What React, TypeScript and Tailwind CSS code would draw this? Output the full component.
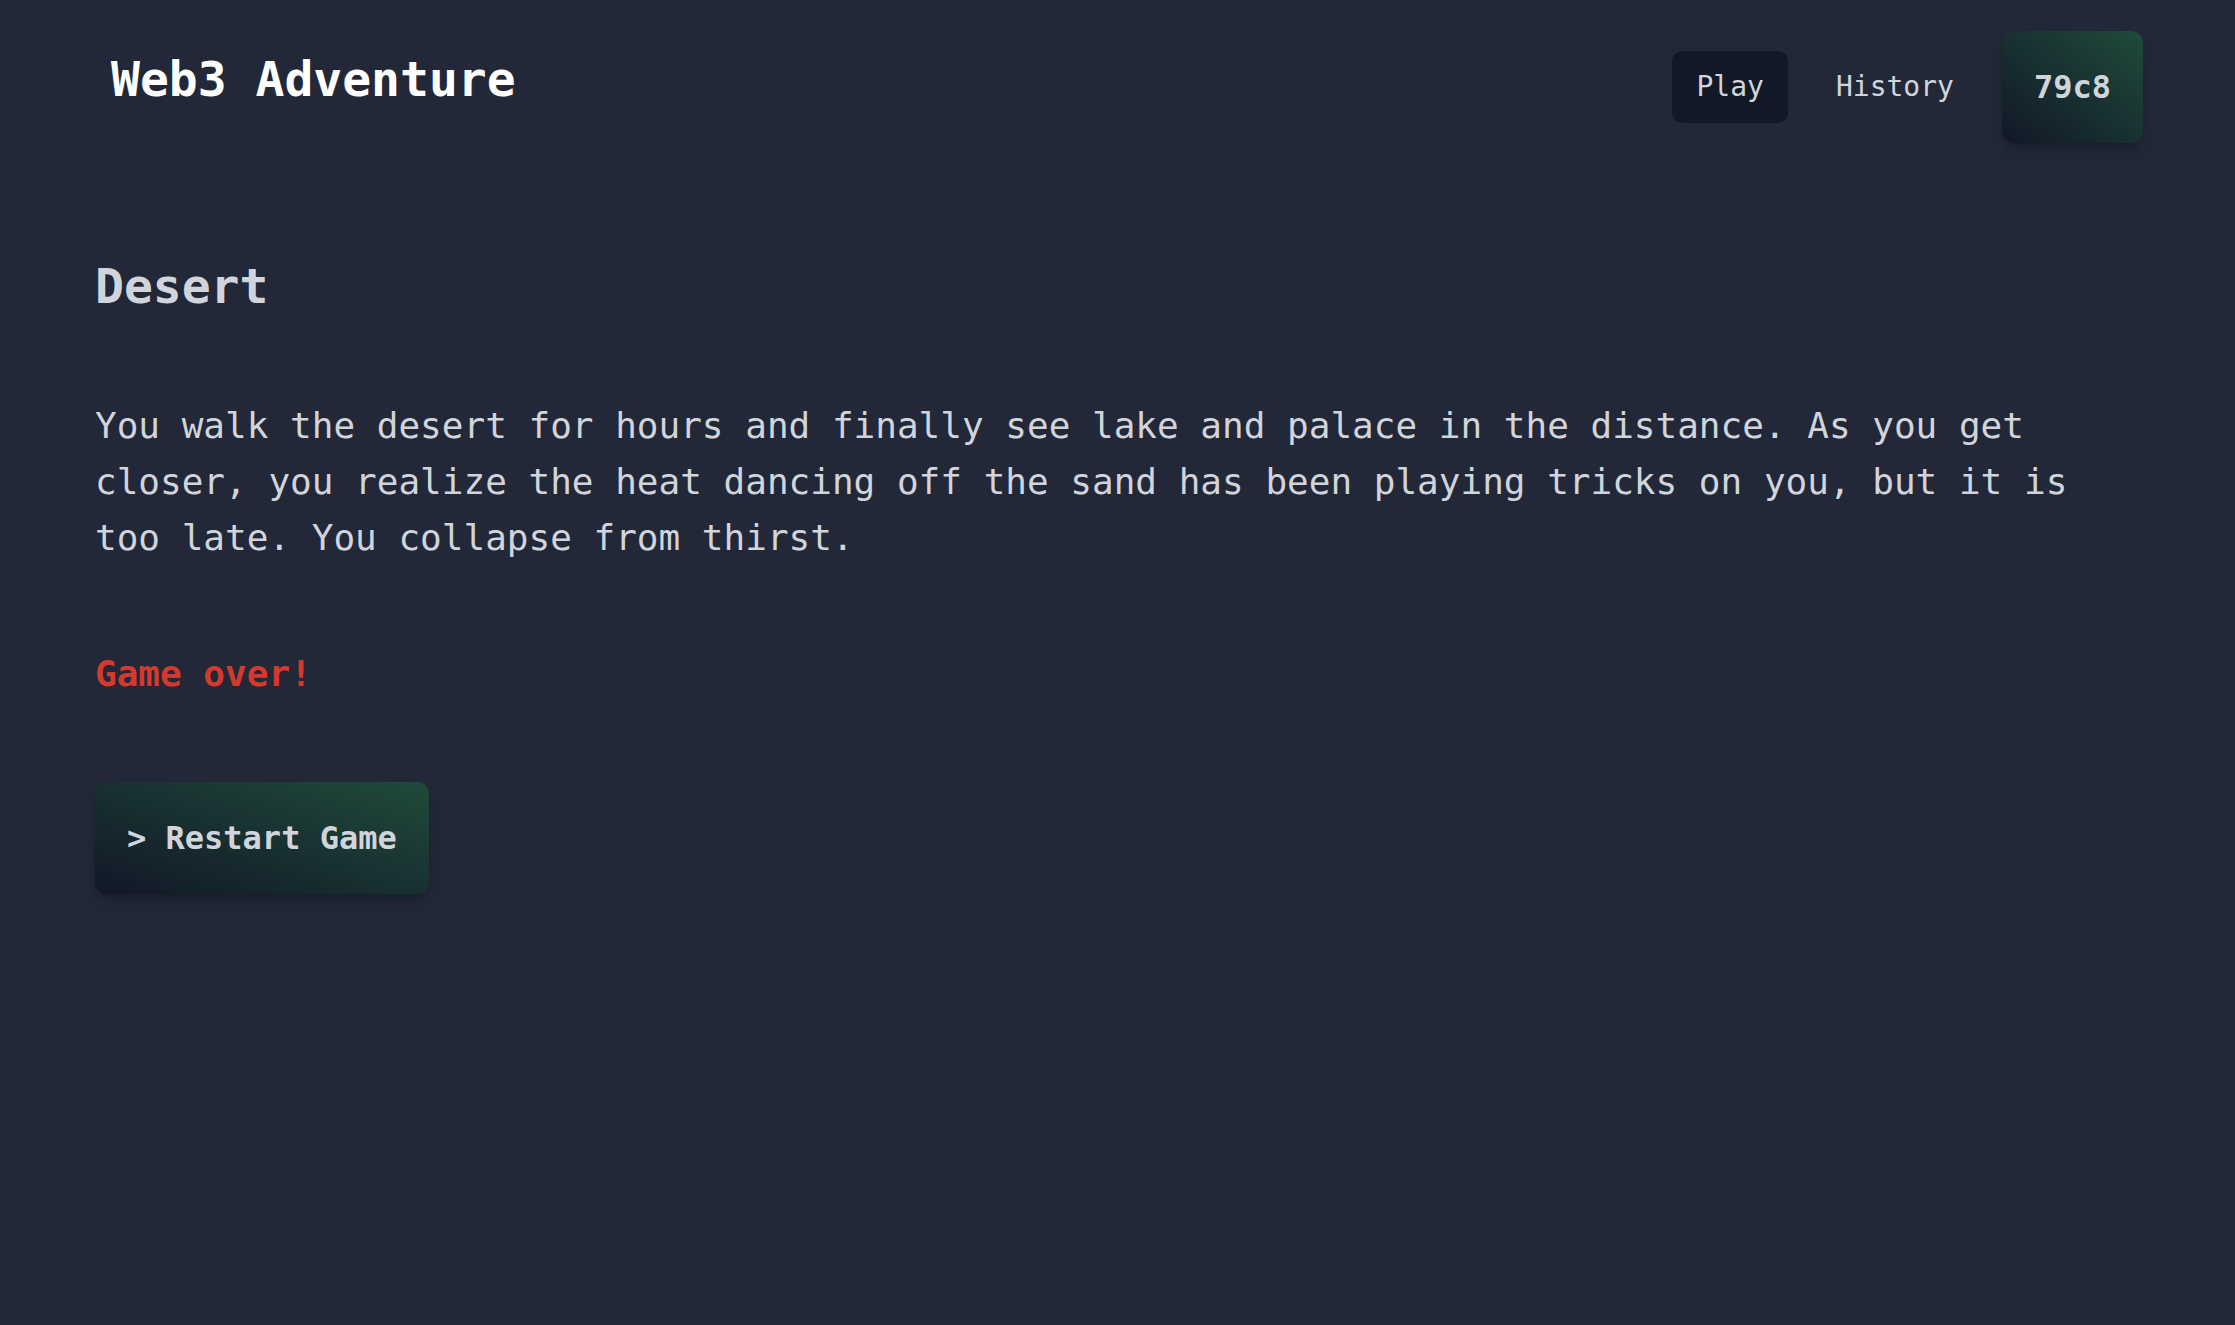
const mono = { fontFamily: '"DejaVu Sans Mono", "Liberation Mono", monospace' };

const Header = () => {
  return (
    <header className="flex items-start justify-between pl-[111px] pr-[92px] pt-[31px]">
      <a href="#" className="mt-[24px] text-[48px] leading-[48px] font-bold text-white">
        Web3 Adventure
      </a>

      <nav className="flex items-center gap-[24px]">
        <a href="#" className="rounded-[10px] bg-[#111827] px-[24px] py-[16px] text-[28px] leading-[40px] text-[#d1d5db]">
          Play
        </a>
        <a href="#" className="rounded-[10px] px-[24px] py-[16px] text-[28px] leading-[40px] text-[#d1d5db]">
          History
        </a>
        <button
          type="button"
          className="rounded-xl bg-linear-to-tr from-[#111827] to-[#1f4b39] px-[32px] py-[32px] text-[32px] leading-[48px] font-bold text-[#d1d5db] shadow-lg shadow-black/20"
        >
          79c8
        </button>
      </nav>
    </header>
  );
};

export default function App() {
  return (
    <div className="min-h-[1325px] w-full bg-[#222837]" style={mono}>
      <Header />

      <main className="pl-[95px] pr-[92px] pt-[119px]">
        <h2 className="text-[48px] leading-[48px] font-bold text-[#d1d5db]">Desert</h2>

        <p className="mt-[88px] text-[36px] leading-[56px] text-[#d1d5db]">
          You walk the desert for hours and finally see lake and palace in the distance. As you get closer, you
          realize the heat dancing off the sand has been playing tricks on you, but it is too late. You collapse
          from thirst.
        </p>

        <p className="mt-[80px] text-[36px] leading-[56px] font-bold text-[#d33a2d]">Game over!</p>

        <button
          type="button"
          className="mt-[80px] rounded-xl bg-linear-to-tr from-[#111827] to-[#1f4b39] px-[32px] py-[32px] text-[32px] leading-[48px] font-bold text-[#d1d5db] shadow-lg shadow-black/20"
        >
          &gt; Restart Game
        </button>
      </main>
    </div>
  );
}
